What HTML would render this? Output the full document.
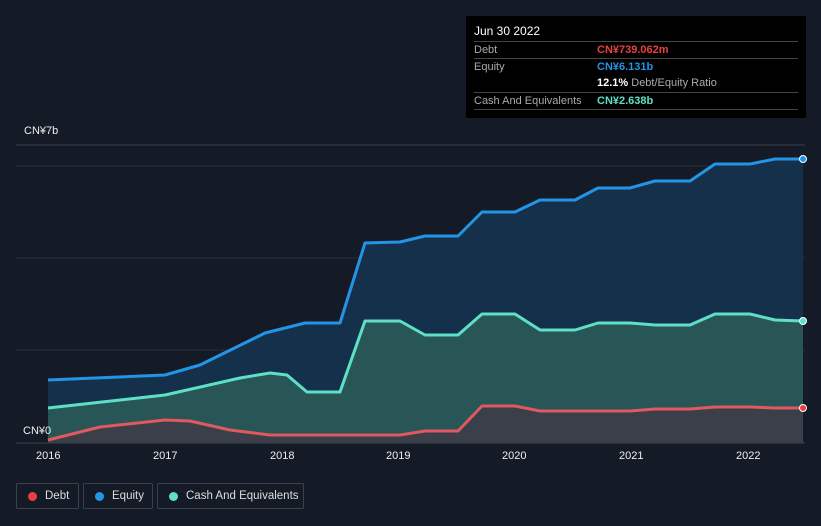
<!DOCTYPE html>
<html><head><meta charset="utf-8"><style>
body{margin:0;width:821px;height:526px;background:#151b26;font-family:"Liberation Sans",sans-serif;overflow:hidden;position:relative}
.tt{position:absolute;left:466px;top:16px;width:340px;height:102px;background:#000;color:#fff;font-size:11px}
.row{position:absolute;left:8px;width:324px;border-top:1px solid #444;height:16px;line-height:16px}
.l{color:#aaa;position:absolute;left:0}.v{position:absolute;left:123px;font-weight:bold}
.lg{position:absolute;top:483px;height:26px;border:1px solid #3a404c;border-radius:2px;color:#ddd;font-size:11.5px;line-height:24px;box-sizing:border-box;white-space:nowrap}
.lg i{position:absolute;left:11px;top:8px;width:9px;height:9px;border-radius:50%}
.ax{position:absolute;top:450px;color:#eee;font-size:11px}
</style></head><body>
<div class="tt">
<div style="position:absolute;left:8px;top:8px;font-size:12px">Jun 30 2022</div>
<div class="row" style="top:25px"><span class="l">Debt</span><span class="v" style="color:#e94040">CN¥739.062m</span></div>
<div class="row" style="top:42px"><span class="l">Equity</span><span class="v" style="color:#2394e6">CN¥6.131b</span></div>
<div class="row" style="top:59px;border-top:none"><span class="v" style="color:#fff">12.1% <span style="color:#aaa;font-weight:normal">Debt/Equity Ratio</span></span></div>
<div class="row" style="top:76px"><span class="l">Cash And Equivalents</span><span class="v" style="color:#5ee0c8">CN¥2.638b</span></div>
<div class="row" style="top:93px;height:0"></div>
</div>
<div style="position:absolute;left:24px;top:125px;color:#eee;font-size:11px">CN¥7b</div>
<svg width="821" height="526" style="position:absolute;left:0;top:0">
<line x1="16" y1="145" x2="805" y2="145" stroke="#3a404c"/>
<g stroke="#262d3a"><line x1="16" y1="166" x2="805" y2="166"/><line x1="16" y1="258" x2="805" y2="258"/><line x1="16" y1="350" x2="805" y2="350"/></g>
<path d="M48,380 L165,375 200,365 265,333 305,323 340,323 365,243 400,242 425,236 458,236 482,212 515,212 540,200 575,200 598,188 630,188 655,181 690,181 715,164 750,164 775,159 803,159 L803,443 48,443Z" fill="#14304a"/>
<path d="M48,408 L165,395 240,378 270,373 287,375 307,392 340,392 365,321 400,321 425,335 458,335 482,314 515,314 540,330 575,330 598,323 630,323 655,325 690,325 715,314 750,314 775,320 803,321 L803,443 48,443Z" fill="#285556"/>
<path d="M48,440 L100,427 165,420 190,421 230,430 270,435 300,435 400,435 425,431 458,431 482,406 515,406 540,411 630,411 655,409 690,409 715,407 750,407 775,408 803,408 L803,443 48,443Z" fill="#3a3f4a"/>
<polyline fill="none" stroke="#2394e6" stroke-width="3" stroke-linejoin="round" points="48,380 165,375 200,365 265,333 305,323 340,323 365,243 400,242 425,236 458,236 482,212 515,212 540,200 575,200 598,188 630,188 655,181 690,181 715,164 750,164 775,159 803,159"/>
<polyline fill="none" stroke="#5ee0c8" stroke-width="3" stroke-linejoin="round" points="48,408 165,395 240,378 270,373 287,375 307,392 340,392 365,321 400,321 425,335 458,335 482,314 515,314 540,330 575,330 598,323 630,323 655,325 690,325 715,314 750,314 775,320 803,321"/>
<polyline fill="none" stroke="#e05860" stroke-width="3" stroke-linejoin="round" points="48,440 100,427 165,420 190,421 230,430 270,435 300,435 400,435 425,431 458,431 482,406 515,406 540,411 630,411 655,409 690,409 715,407 750,407 775,408 803,408"/>
<line x1="16" y1="443" x2="805" y2="443" stroke="#3a404c"/>
<circle cx="803" cy="159" r="3.5" fill="#2394e6" stroke="#fff"/>
<circle cx="803" cy="321" r="3.5" fill="#5ee0c8" stroke="#fff"/>
<circle cx="803" cy="408" r="3.5" fill="#e94040" stroke="#fff"/>
</svg>
<div style="position:absolute;left:23px;top:425px;color:#eee;font-size:11px">CN¥0</div>
<div class="ax" style="left:36px">2016</div><div class="ax" style="left:153px">2017</div><div class="ax" style="left:270px">2018</div><div class="ax" style="left:386px">2019</div><div class="ax" style="left:502px">2020</div><div class="ax" style="left:619px">2021</div><div class="ax" style="left:736px">2022</div>
<div class="lg" style="left:16px;width:63px"><i style="background:#e94040"></i><span style="position:absolute;left:28px">Debt</span></div>
<div class="lg" style="left:83px;width:70px"><i style="background:#2394e6"></i><span style="position:absolute;left:28px">Equity</span></div>
<div class="lg" style="left:157px;width:147px"><i style="background:#5ee0c8"></i><span style="position:absolute;left:28px">Cash And Equivalents</span></div>
</body></html>
